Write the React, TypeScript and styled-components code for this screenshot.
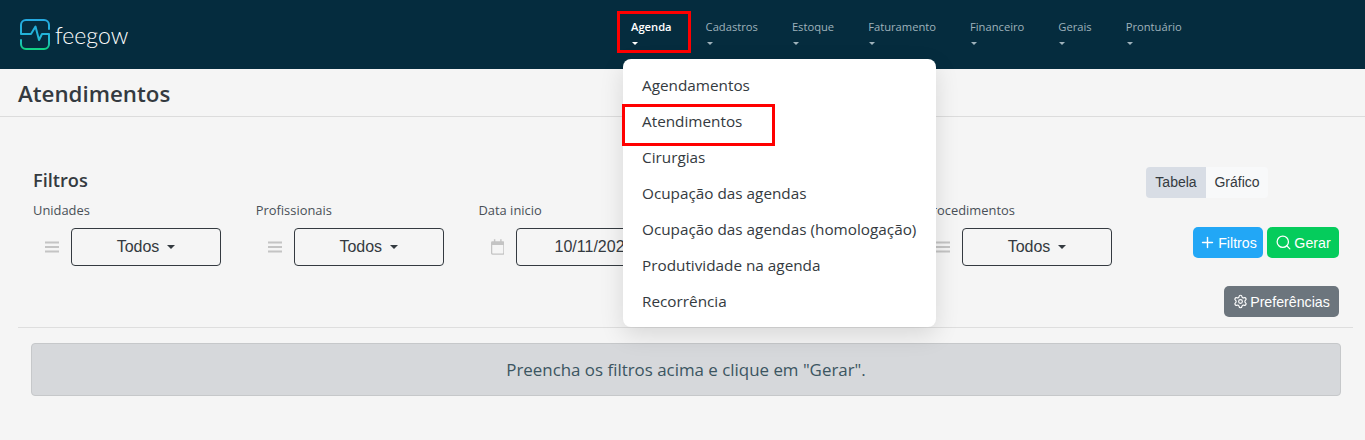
import React from "react";
import styled, { createGlobalStyle } from "styled-components";
import { Search, Settings, Plus } from "lucide-react";

const Global = createGlobalStyle`
  html, body { margin: 0; padding: 0; background: #f5f5f5; }
  body { font-family: "Open Sans", "Noto Sans", sans-serif; color: #343a40; }
  * { box-sizing: border-box; }
`;

const Page = styled.div`
  width: 1365px;
  height: 440px;
  overflow: hidden;
  background: #f5f5f5;
`;

const Navbar = styled.header`
  height: 69px;
  background: #052c3e;
  display: flex;
  align-items: flex-start;
  padding-left: 20px;
`;

const Brand = styled.div`
  display: flex;
  align-items: center;
  gap: 5px;
  height: 69px;
  width: 594px;
`;

const BrandName = styled.span`
  font-family: Lato, sans-serif;
  font-size: 23px;
  font-weight: 300;
  color: #fff;
`;

const NavList = styled.nav`
  display: flex;
`;

const NavItem = styled.div<{ $active?: boolean }>`
  position: relative;
  padding: 18px 17px 0;
  height: 69px;
  font-size: 11.2px;
  font-weight: ${(p) => (p.$active ? 600 : 400)};
  line-height: 17px;
  color: ${(p) => (p.$active ? "#ffffff" : "#9fb2bb")};
`;

const NavCaret = styled.i<{ $active?: boolean }>`
  display: block;
  width: 0;
  height: 0;
  margin-top: 7px;
  margin-left: 1px;
  border-left: 3.5px solid transparent;
  border-right: 3.5px solid transparent;
  border-top: 3.5px solid ${(p) => (p.$active ? "#ffffff" : "#9fb2bb")};
`;

const AgendaMark = styled.span`
  position: absolute;
  left: 3px;
  top: 11px;
  width: 74px;
  height: 42px;
  border: 3px solid #ff0000;
`;

const Menu = styled.div`
  position: absolute;
  z-index: 5;
  left: 9px;
  top: 59px;
  width: 313px;
  height: 268px;
  padding: 8px 0;
  background: #fff;
  border-radius: 8px;
  box-shadow: 0 8px 24px rgba(0, 0, 0, 0.12);
`;

const MenuItem = styled.div`
  position: relative;
  height: 36px;
  padding-left: 19px;
  font-size: 15.3px;
  font-weight: 400;
  line-height: 37px;
  color: #343a40;
  white-space: nowrap;
`;

const MenuMark = styled.span`
  position: absolute;
  left: -1px;
  top: 1px;
  width: 153px;
  height: 42px;
  border: 3px solid #ff0000;
`;

const TitleBar = styled.div`
  height: 48px;
  padding: 10px 0 0 18px;
  border-bottom: 1px solid #dcdcdc;
`;

const Title = styled.h1`
  margin: 0;
  font-size: 22.3px;
  line-height: 30px;
  font-weight: 600;
  color: #343a40;
`;

const Content = styled.main`
  padding: 50px 12px 0 18px;
`;

const FiltersArea = styled.section`
  position: relative;
  height: 161px;
  padding-left: 15px;
  border-bottom: 1px solid #dedede;
`;

const HeadRow = styled.div`
  display: flex;
  justify-content: space-between;
  align-items: flex-start;
  padding-right: 85px;
  height: 34px;
`;

const Heading = styled.h2`
  margin: 1px 0 0;
  font-size: 18.2px;
  line-height: 24px;
  font-weight: 600;
  color: #343a40;
`;

const Toggle = styled.div`
  display: flex;
  height: 31px;
  border-radius: 4px;
  overflow: hidden;
  font-family: "Liberation Sans", sans-serif;
  font-size: 14px;
`;

const ToggleOption = styled.div<{ $on?: boolean }>`
  width: ${(p) => (p.$on ? 60 : 62)}px;
  text-align: center;
  line-height: 31px;
  color: #343a40;
  background: ${(p) => (p.$on ? "#d8dde5" : "#f8f9fa")};
`;

const FilterRow = styled.div`
  display: flex;
`;

const Filter = styled.div`
  width: 222.75px;
  flex: none;
`;

const FilterLabel = styled.div`
  font-size: 12.9px;
  line-height: 18px;
  color: #495057;
  white-space: nowrap;
`;

const FilterControl = styled.div`
  display: flex;
  align-items: center;
  margin-top: 9px;
  padding-left: 12px;
  gap: 12px;
`;

const Select = styled.div<{ $date?: boolean }>`
  width: 150px;
  height: 38px;
  display: flex;
  align-items: center;
  justify-content: center;
  gap: 8px;
  padding-left: ${(p) => (p.$date ? 6 : 0)}px;
  border: 1px solid #343a40;
  border-radius: 4px;
  font-family: "Liberation Sans", sans-serif;
  font-size: 16px;
  color: #343a40;
  white-space: nowrap;
`;

const SelectCaret = styled.i`
  width: 0;
  height: 0;
  border-left: 4.5px solid transparent;
  border-right: 4.5px solid transparent;
  border-top: 4.5px solid #343a40;
`;

const Actions = styled.div`
  position: absolute;
  right: 14px;
  top: 60px;
  display: flex;
  flex-direction: column;
  align-items: flex-end;
  gap: 28px;
`;

const ActionRow = styled.div`
  display: flex;
  gap: 4px;
`;

const ActionButton = styled.div<{ $bg: string; $w: number }>`
  width: ${(p) => p.$w}px;
  height: 31px;
  display: flex;
  align-items: center;
  justify-content: center;
  gap: 2px;
  border-radius: 5px;
  background: ${(p) => p.$bg};
  color: #fff;
  font-family: "Liberation Sans", sans-serif;
  font-size: 14.2px;
  white-space: nowrap;
`;

const Alert = styled.div`
  margin: 15px 12px 0 13px;
  height: 53px;
  background: #d6d8db;
  border: 1px solid #c6c8ca;
  border-radius: 4px;
  text-align: center;
  font-size: 16.9px;
  line-height: 52px;
  color: #3b5561;
`;

const GreyIcon = styled.svg<{ $tall?: boolean }>`
  flex: none;
  width: ${(p) => (p.$tall ? 13.5 : 14)}px;
  height: ${(p) => (p.$tall ? 16 : 14)}px;
  fill: #c4c4c4;
`;

const Bars = () => (
  <GreyIcon viewBox="0 0 14 14">
    <rect x="0" y="1.5" width="14" height="2" />
    <rect x="0" y="6" width="14" height="2" />
    <rect x="0" y="10.5" width="14" height="2" />
  </GreyIcon>
);

const CalendarIcon = () => (
  <GreyIcon $tall viewBox="0 0 14 16">
    <path d="M3 0h1.500v2h5V0H11v2h1.500A1.500 1.500 0 0 1 14 3.500V14.500A1.500 1.500 0 0 1 12.500 16H1.500A1.500 1.500 0 0 1 0 14.500V3.500A1.500 1.500 0 0 1 1.500 2H3V0zM1.300 6v8.200c0 .300.200.500.500.500h10.400c.300 0 .500-.200.500-.500V6H1.300z" />
  </GreyIcon>
);

const Logo = () => (
  <svg width="30" height="31" viewBox="0 0 30 31" fill="none">
    <defs>
      <linearGradient id="lg" x1="0" y1="0" x2="0" y2="31" gradientUnits="userSpaceOnUse">
        <stop offset="0" stopColor="#25a9e0" />
        <stop offset="0.6" stopColor="#22b5d6" />
        <stop offset="1" stopColor="#10d47f" />
      </linearGradient>
    </defs>
    <path
      d="M29 10V6a5 5 0 0 0-5-5H6a5 5 0 0 0-5 5v9h10l4.500-7.500L19 21l3-6h7v10a5 5 0 0 1-5 5H6a5 5 0 0 1-5-5v-4"
      stroke="url(#lg)"
      strokeWidth="2"
      strokeLinejoin="round"
      strokeLinecap="round"
    />
  </svg>
);

const navItems = ["Cadastros", "Estoque", "Faturamento", "Financeiro", "Gerais", "Prontuário"];
const menuItems = [
  "Agendamentos",
  "Atendimentos",
  "Cirurgias",
  "Ocupação das agendas",
  "Ocupação das agendas (homologação)",
  "Produtividade na agenda",
  "Recorrência",
];

const filters = [
  { label: "Unidades", value: "Todos", date: false },
  { label: "Profissionais", value: "Todos", date: false },
  { label: "Data inicio", value: "10/11/2022", date: true },
  { label: "Data fim", value: "10/11/2022", date: true },
  { label: "Procedimentos", value: "Todos", date: false },
];

export default function App() {
  return (
    <Page>
      <Global />
      <Navbar>
        <Brand>
          <Logo />
          <BrandName>feegow</BrandName>
        </Brand>
        <NavList>
          <NavItem $active>
            Agenda
            <NavCaret $active />
            <AgendaMark />
            <Menu>
              {menuItems.map((m) => (
                <MenuItem key={m}>
                  {m}
                  {m === "Atendimentos" && <MenuMark />}
                </MenuItem>
              ))}
            </Menu>
          </NavItem>
          {navItems.map((n) => (
            <NavItem key={n}>
              {n}
              <NavCaret />
            </NavItem>
          ))}
        </NavList>
      </Navbar>
      <TitleBar>
        <Title>Atendimentos</Title>
      </TitleBar>
      <Content>
        <FiltersArea>
          <HeadRow>
            <Heading>Filtros</Heading>
            <Toggle>
              <ToggleOption $on>Tabela</ToggleOption>
              <ToggleOption>Gráfico</ToggleOption>
            </Toggle>
          </HeadRow>
          <FilterRow>
            {filters.map((f) => (
              <Filter key={f.label}>
                <FilterLabel>{f.label}</FilterLabel>
                <FilterControl>
                  {f.date ? <CalendarIcon /> : <Bars />}
                  <Select $date={f.date}>
                    {f.value}
                    {!f.date && <SelectCaret />}
                  </Select>
                </FilterControl>
              </Filter>
            ))}
          </FilterRow>
          <Actions>
            <ActionRow>
              <ActionButton $bg="#22a7f6" $w={70}>
                <Plus size={17} strokeWidth={2} />
                Filtros
              </ActionButton>
              <ActionButton $bg="#05cc5c" $w={72}>
                <Search size={17} strokeWidth={1.8} />
                Gerar
              </ActionButton>
            </ActionRow>
            <ActionButton $bg="#6c757d" $w={115}>
              <Settings size={15} strokeWidth={1.8} />
              Preferências
            </ActionButton>
          </Actions>
        </FiltersArea>
        <Alert>Preencha os filtros acima e clique em "Gerar".</Alert>
      </Content>
    </Page>
  );
}
